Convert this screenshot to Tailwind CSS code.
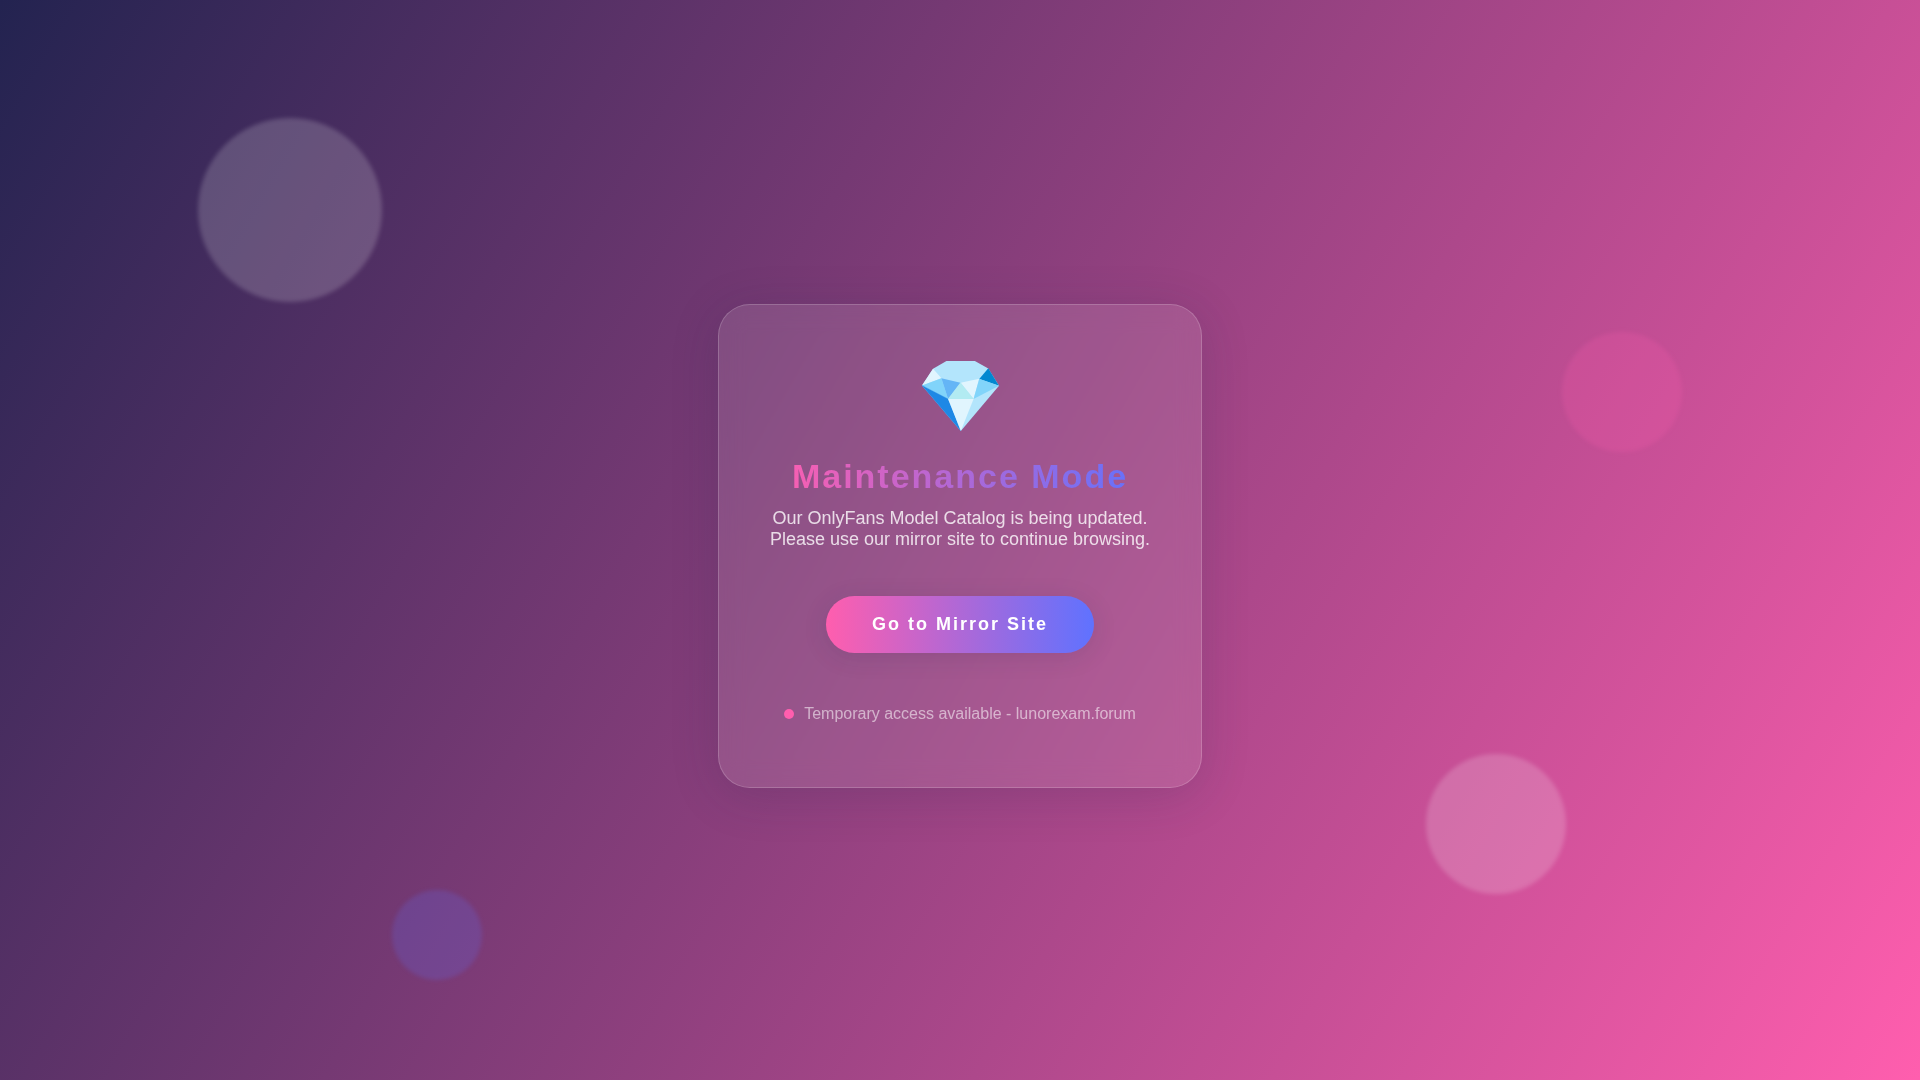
<!DOCTYPE html>
<html lang="en">
<head>
  <meta charset="UTF-8">
  <meta name="viewport" content="width=device-width, initial-scale=1.0">
  <title>Maintenance Mode</title>
  <script src="https://cdn.jsdelivr.net/npm/@tailwindcss/browser@4"></script>
</head>
<body class="relative min-h-screen overflow-hidden flex items-center justify-center pt-3 px-4 font-['Liberation_Sans',Arial,sans-serif] text-white bg-[linear-gradient(120deg,#232350_0%,#ff5eae_100%)]">

<!-- Floating circles -->
<div class="absolute left-[198px] top-[118px] size-[184px] rounded-full bg-white/18 blur-[2px]"></div>
<div class="absolute right-[238px] top-[332px] size-[120px] rounded-full bg-[#ff5eae]/20 blur-[2px]"></div>
<div class="absolute right-[354px] bottom-[186px] size-[140px] rounded-full bg-white/18 blur-[2px]"></div>
<div class="absolute left-[392px] bottom-[100px] size-[90px] rounded-full bg-[#5f72ff]/20 blur-[2px]"></div>

<!-- Card -->
<main class="relative flex flex-col items-center text-center px-[51px] pt-14 pb-[61px] rounded-[32px] border border-white/18 bg-white/11 shadow-[0_8px_48px_rgba(31,38,80,0.18)] backdrop-blur-md">
  <svg class="w-[77px] h-[70px]" viewBox="65 65 230 206" preserveAspectRatio="none" aria-hidden="true">
    <path fill="#b3e5fc" d="M138 65h85l40 22 32 51-114 133-116-134 33-49z"/>
    <path fill="#e1f5fe" d="M98 88l25 28-58 21z"/>
    <path fill="#0288d1" d="M263 86l32 52-59-20z"/>
    <path fill="#81d4fa" d="M65 137l58-21 20 61z"/>
    <path fill="#64b5f6" d="M123 116l57 13-37 48z"/>
    <path fill="#e1f5fe" d="M180 129l56-12-17 60z"/>
    <path fill="#81d4fa" d="M236 117l59 21-76 39z"/>
    <path fill="#b2ebf2" stroke="#b2ebf2" d="M180 129l39 48h-76z"/>
    <path fill="#1e88e5" stroke="#1e88e5" d="M65 137l78 40 38 94z"/>
    <path fill="#e1f5fe" d="M143 177h76l-38 94z"/>
  </svg>
  <h1 class="w-full mt-[25px] text-[34px] leading-10 font-bold tracking-[2px] text-transparent bg-clip-text bg-[linear-gradient(90deg,#ff5eae,#5f72ff)]">Maintenance Mode</h1>
  <p class="mt-3 text-[18px] leading-[21px] text-white/80">Our OnlyFans Model Catalog is being updated.<br>Please use our mirror site to continue browsing.</p>
  <button type="button" class="mt-[46px] h-[57px] px-[46px] rounded-full text-[18px] font-bold tracking-[2px] bg-[linear-gradient(90deg,#ff5eae,#5f72ff)] shadow-[0_4px_24px_rgba(31,38,80,0.13)] cursor-pointer">Go to Mirror Site</button>
  <div class="mt-[49px] flex items-center gap-2.5 text-base leading-6 text-white/55">
    <span class="size-2.5 rounded-full bg-[#ff5eae]"></span>
    <span>Temporary access available - lunorexam.forum</span>
  </div>
</main>

</body>
</html>
